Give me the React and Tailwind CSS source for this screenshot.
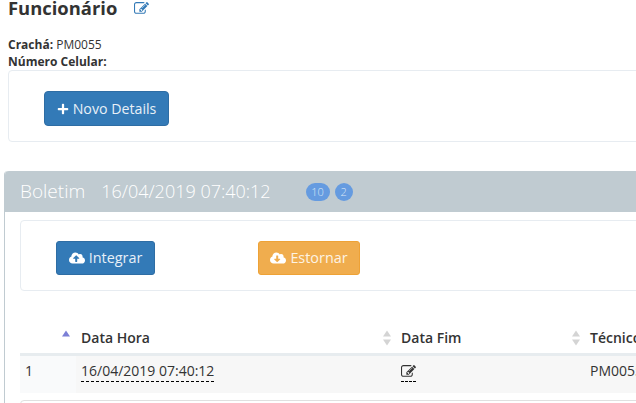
import React from "react";
import { FaPlus, FaCloudUploadAlt, FaCloudDownloadAlt } from "react-icons/fa";

function EditIcon({ className }) {
  return (
    <svg viewBox="0 0 1792 1792" fill="currentColor" className={className}>
      <path d="M888 1184l116-116-152-152-116 116v56h96v96h56zm440-720q-16-16-33 1l-350 350q-17 17-1 33t33-1l350-350q17-17 1-33zm80 594v190q0 119-84.500 203.500t-203.500 84.500h-832q-119 0-203.500-84.500t-84.500-203.500v-832q0-119 84.500-203.500t203.500-84.500h832q63 0 117 25 15 7 18 23 3 17-9 29l-49 49q-14 14-32 8-23-6-45-6h-832q-66 0-113 47t-47 113v832q0 66 47 113t113 47h832q66 0 113-47t47-113v-126q0-13 9-22l64-64q15-15 35-7t20 29zm-96-738l288 288-672 672h-288v-288zm444 132l-92 92-288-288 92-92q28-28 68-28t68 28l152 152q28 28 28 68t-28 68z" />
    </svg>
  );
}

function SortIcon({ both }) {
  return (
    <svg width="10" height="16" viewBox="0 0 10 16" className="shrink-0">
      <path d="M5 0.5 L9 6.5 H1 Z" fill={both ? "#d4d4d4" : "#7b7fd6"} />
      {both && <path d="M5 15.5 L9 9.5 H1 Z" fill="#d4d4d4" />}
    </svg>
  );
}

export default function App() {
  return (
    <div className="w-[636px] h-[403px] overflow-hidden bg-white text-[#333] font-['Open_Sans',sans-serif]">
      <div className="w-[800px] flex flex-col">
        <div className="h-[36px] pl-2 flex items-start">
          <h1 className="text-[18.4px] leading-[15px] font-bold text-[#333]">Funcionário</h1>
          <EditIcon className="ml-[17px] mt-[1px] w-[15px] h-[15px] text-[#337ab7]" />
        </div>
        <div className="pl-2 text-[12px] leading-[17px]">
          <div><span className="font-bold">Crachá:</span> PM0055</div>
          <div className="font-bold">Número Celular:</div>
        </div>
        <div className="ml-2 h-[72px] border border-[#e7ecf1] rounded-[4px] pl-[35px] pt-5">
          <button className="h-[35px] w-[125px] rounded-[4px] bg-[#337ab7] border border-[#2e6da4] text-white text-[14.2px] flex items-center justify-center gap-[4px]">
            <FaPlus className="text-[12px]" />
            <span className="text-[#e8f0f7]">Novo Details</span>
          </button>
        </div>
        <div className="ml-1 mt-[29px] border-l border-[#c0cbd1] rounded-tl-[4px]">
          <div className="h-[41px] bg-[#c0cbd1] rounded-tl-[4px] flex items-center pl-[15px] text-white">
            <span className="font-light text-[19px]">Boletim</span>
            <span className="ml-4 font-light text-[18px]">16/04/2019 07:40:12</span>
            <span className="ml-[35px] h-[18px] w-6 rounded-full bg-[#659be0] text-[11px] font-light leading-[18px] text-center text-[#dbe7f7]">10</span>
            <span className="ml-[5px] h-[18px] w-[18px] rounded-full bg-[#659be0] text-[11px] font-light leading-[18px] text-center text-[#dbe7f7]">2</span>
          </div>
          <div className="pl-[15px] pt-2">
            <div className="h-[71px] border border-[#e7ecf1] rounded-[4px] pl-[35px] pt-5 flex items-start">
              <button className="h-[34px] w-[99px] rounded-[3px] bg-[#337ab7] border border-[#2e6da4] text-[#e8f0f7] text-[14.4px] flex items-center justify-center gap-[4px]">
                <FaCloudUploadAlt className="text-[16px] text-white" />
                Integrar
              </button>
              <button className="ml-[103px] h-[34px] w-[102px] rounded-[3px] bg-[#f0ad4e] border border-[#eea236] text-[#fdf3e3] text-[14.4px] flex items-center justify-center gap-[4px]">
                <FaCloudDownloadAlt className="text-[16px] text-white" />
                Estornar
              </button>
            </div>
            <div className="mt-[29px] grid grid-cols-[56px_320px_189px_1fr] text-[14px]">
              <div className="h-[36px] border-b-[3px] border-[#e7ecef] flex justify-end pr-[5px] pt-[10px]">
                <SortIcon />
              </div>
              <div className="h-[36px] border-b-[3px] border-[#e7ecef] flex items-center justify-between pl-[5px] pr-[4px] pt-[2px] font-semibold">
                Data Hora
                <SortIcon both />
              </div>
              <div className="h-[36px] border-b-[3px] border-[#e7ecef] flex items-center justify-between pl-[5px] pr-[4px] pt-[2px] font-semibold">
                Data Fim
                <SortIcon both />
              </div>
              <div className="h-[36px] border-b-[3px] border-[#e7ecef] flex items-center pl-[5px] pt-[2px] font-semibold">
                Técnico
              </div>
              <div className="h-[37px] bg-[#f9fafb] flex items-start pl-[5px] pt-[5px] leading-[20px]">1</div>
              <div className="h-[37px] bg-[#f7f7f7] flex items-start pl-[5px] pt-[5px]">
                <span className="border-b border-dashed border-black leading-[20px]">16/04/2019 07:40:12</span>
              </div>
              <div className="h-[37px] bg-[#f7f7f7] flex items-start pl-[5px] pt-[5px]">
                <span className="border-b border-dashed border-black h-[21px] flex items-start pt-[3px]">
                  <EditIcon className="w-[15px] h-[15px] text-[#333]" />
                </span>
              </div>
              <div className="h-[37px] bg-[#f7f7f7] flex items-start pl-[5px] pt-[5px] leading-[20px]">PM0055</div>
            </div>
            <div className="mt-[7px] h-4 border border-[#e0e0e0] rounded-t-[4px]" />
          </div>
        </div>
      </div>
    </div>
  );
}
